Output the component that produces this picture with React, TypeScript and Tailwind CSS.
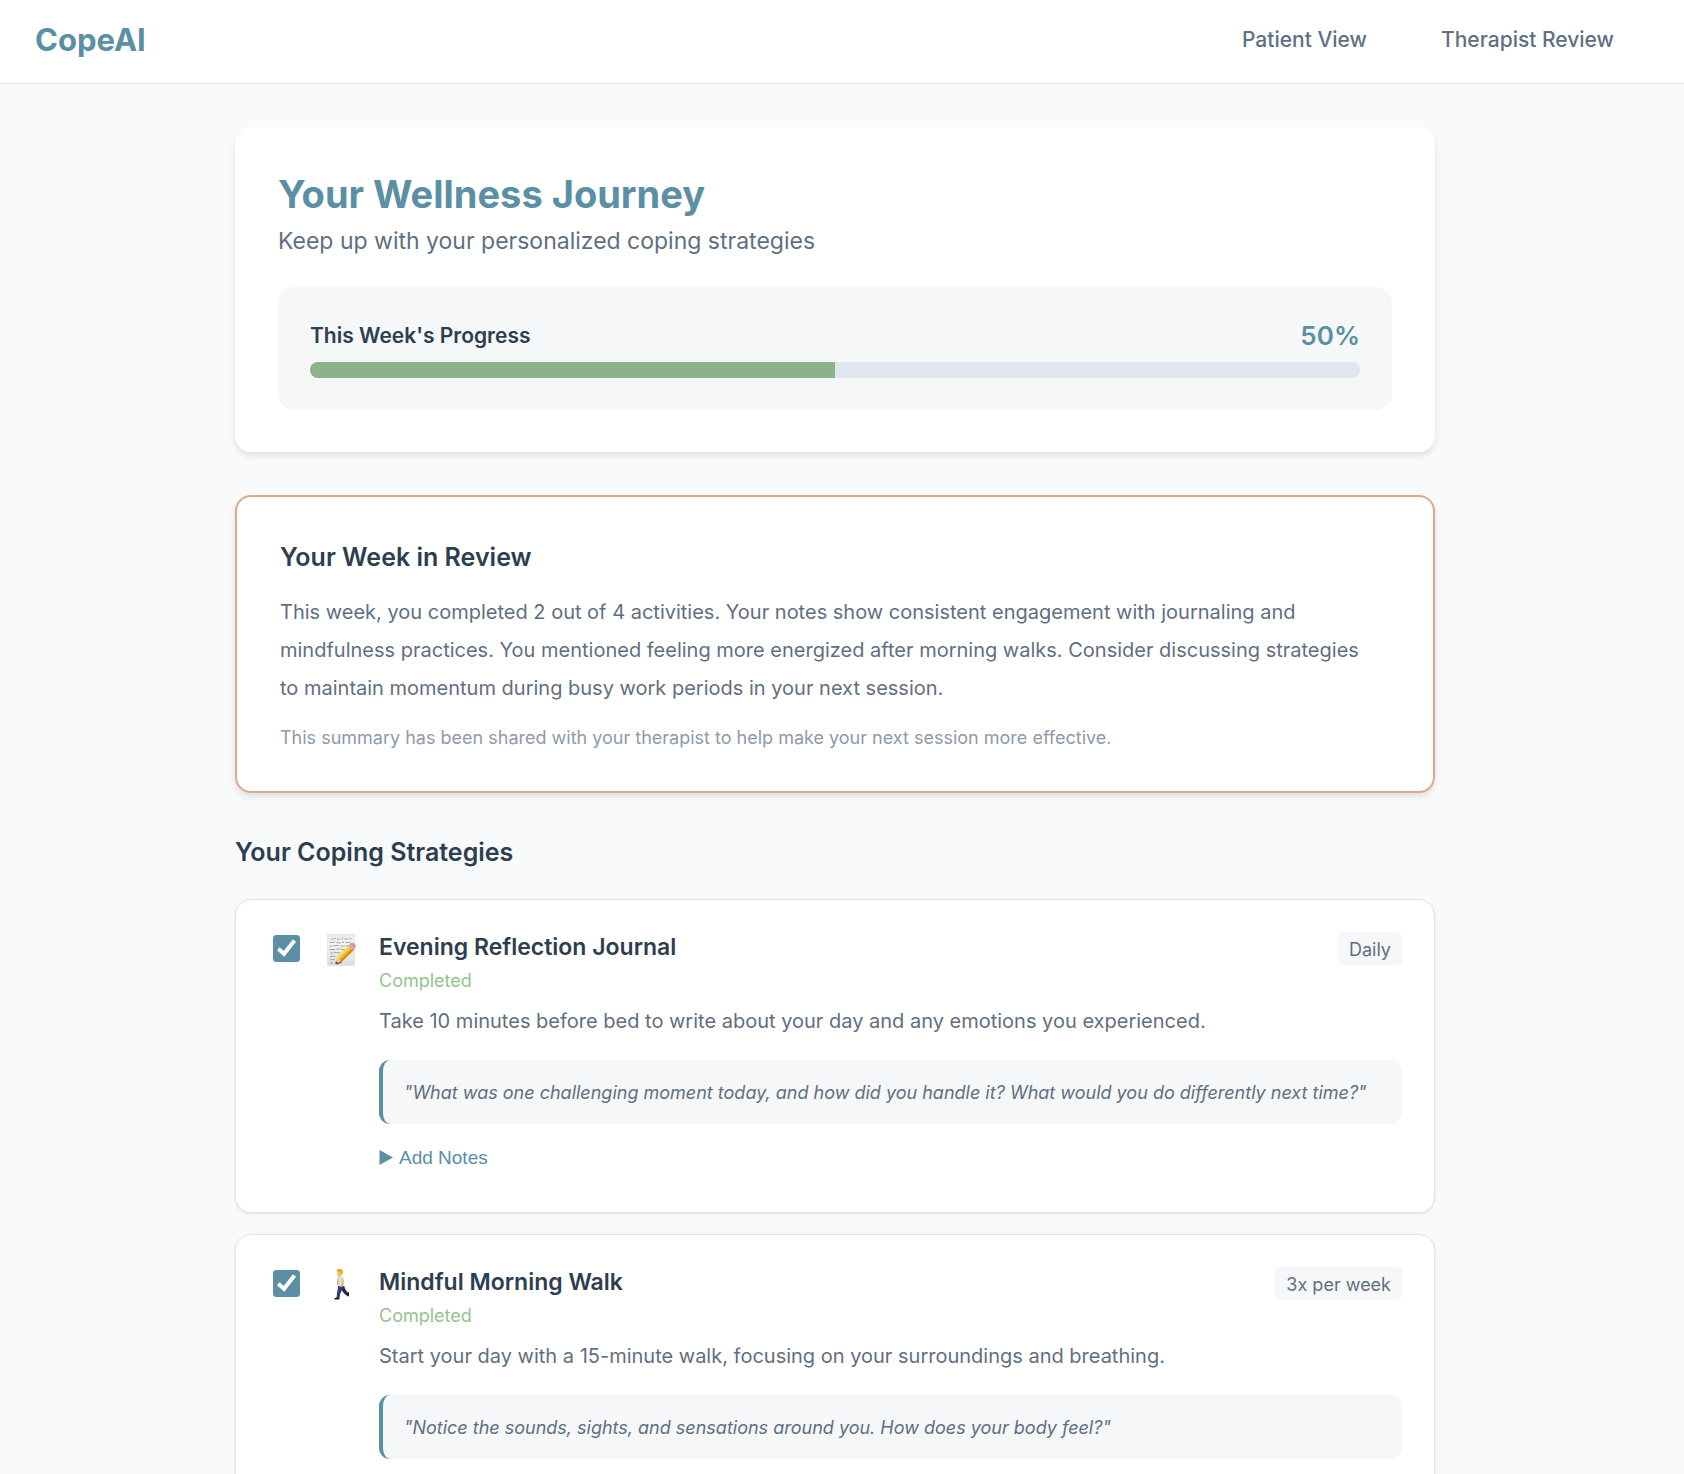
import { useState } from "react";
import type { ReactNode } from "react";

function MemoIcon() {
  return (
    <svg viewBox="0 0 32 36" className="h-9 w-8" aria-hidden="true">
      <defs>
        <linearGradient id="memo-paper" x1="0" y1="0" x2="0" y2="1">
          <stop offset="0" stopColor="#e9e9e9" />
          <stop offset="0.3" stopColor="#f4f4f4" />
          <stop offset="1" stopColor="#dedede" />
        </linearGradient>
      </defs>
      <rect x="1.5" y="2.3" width="27" height="31.4" fill="url(#memo-paper)" stroke="#dcdcdc" strokeWidth="0.6" />
      <g stroke="#6d6d6d" strokeWidth="0.9" fill="none" opacity="0.8">
        <path d="M5 7h2.5M8.500 6.600h1.500M11 7.200h3M15.500 6.800h2M18.500 7h4M24 6.800h1.500" strokeDasharray="1.4 0.5" />
        <path d="M3.800 10.400h5M10.500 10.800h4M16 10.200h2.200M19.500 10.600h5" strokeDasharray="1.8 0.5" />
        <path d="M4 14.200h2.500M7.500 13.600h5.500M14.500 14h4.500M20 13.800h3" strokeDasharray="1.5 0.4" />
        <path d="M3.800 17.600h5.500M10.500 17h3.500M15 17.600h4" strokeDasharray="2 0.4" />
        <path d="M4.400 21h3M8.500 20.600h5.500" strokeDasharray="1.6 0.4" />
        <path d="M4 24.400h5.500M4.600 27.600h4.500M4 31h3" strokeDasharray="1.8 0.5" />
      </g>
      <path d="M9.500 32l1.200-6.300 4.800 4.400z" fill="#edc795" />
      <path d="M9.300 32.200l.6-3 2 2z" fill="#333" />
      <path d="M10.700 25.700L22.300 13.800l5.200 4.500-12 11.800z" fill="#f3b72b" />
      <path d="M10.700 25.700L22.300 13.800l1.600 1.400-11.700 12z" fill="#ffdb66" />
      <path d="M14 28.800L25.800 16.900l1.700 1.400-12 11.800z" fill="#cf8a17" />
      <path d="M22.300 13.800l1.500-1.600 5.200 4.400-1.500 1.700z" fill="#a8b1b5" />
      <path d="M23.800 12.200l1-.9c1-.8 2.400-.6 3.700.5 1.500 1.300 1.700 2.700.9 3.800l-.6 1z" fill="#ec8f8b" />
      <path d="M15.500 30.100l-4.500 1.900" stroke="#222" strokeWidth="1.200" opacity="0.700" />
    </svg>
  );
}

function WalkIcon() {
  return (
    <svg viewBox="1 0 32 36" className="h-9 w-8" aria-hidden="true">
      <path d="M15.600 18.500l3.800.8c.6 2.900 1.500 4.200 3.800 6.800l-2 2.200c-2.700-2.300-4.300-4.200-5-6.800z" fill="#262b57" />
      <path d="M13 17.500l5 .8c-.4 3.600-1 5.200-2.600 8l-.9 4.800h-2.900l.4-5.700c.9-2.300 1-4.500 1-7.900z" fill="#343b78" />
      <path d="M20.900 28l2-2.200.8-1c.6 1.300.5 3.300 0 4.500l-.8.300c-.4-.8-1-1.200-2-1.600z" fill="#15161f" />
      <path d="M9.400 31.800c.2-.9 1.200-1.100 2.400-1.300h2.600v2h-5z" fill="#15161f" />
      <path d="M13.200 8.800c2.200-.8 4.100 0 4.900 2.100.8 2.500.7 5.300.4 8-1.700.8-3.900.6-5.600-.2-.4-3.300-.9-6.400.3-9.900z" fill="#e2e5f0" />
      <path d="M13.200 8.800c-1 2-1.200 4.300-1.200 6.200l1 3.700c1 .5 2 .5 2 .5-.8-3-.7-7 .2-10.700z" fill="#cfd4e4" />
      <path d="M17.500 10.300c1.300 2.600 1.500 5.500.8 8.200l-1.700 1.400-1-.7 1-2.200.2-4.900z" fill="#f1b92e" />
      <path d="M12.700 11.500l-.8 5.600.9.400.6-4.500z" fill="#e5a726" />
      <path d="M12.200 4.200c.3-1.200 1.600-1.800 3-1.600 1.700.2 2.700 1.600 2.400 3.400-.2 1.500-.9 2.300-1.600 2.900l-2.300.5-.3-1c-.8 0-1.200-.3-1.200-1.200z" fill="#f7c83c" />
      <path d="M11.600 4.100c-.1-1.500 1-2.200 2.200-1.900 2.200-.6 4.100.6 4 2.500-.1 1.500-.7 2.500-1.400 3-.1-1.300-.5-2.200-1-2.700-1.100-.2-2.300-.5-3.800-.9z" fill="#dfa629" />
    </svg>
  );
}

type Strategy = {
  id: string;
  title: string;
  frequency: string;
  description: string;
  prompt: string;
  icon: ReactNode;
};

const strategies: Strategy[] = [
  {
    id: "journal",
    title: "Evening Reflection Journal",
    frequency: "Daily",
    description: "Take 10 minutes before bed to write about your day and any emotions you experienced.",
    prompt: "\"What was one challenging moment today, and how did you handle it? What would you do differently next time?\"",
    icon: <MemoIcon />,
  },
  {
    id: "walk",
    title: "Mindful Morning Walk",
    frequency: "3x per week",
    description: "Start your day with a 15-minute walk, focusing on your surroundings and breathing.",
    prompt: "\"Notice the sounds, sights, and sensations around you. How does your body feel?\"",
    icon: <WalkIcon />,
  },
];

function StrategyCard({ strategy }: { strategy: Strategy }) {
  const [done, setDone] = useState(true);
  return (
    <li className="flex rounded-2xl border border-[#e1e6eb] bg-white px-8 pt-8 pb-10 shadow-[0_1px_3px_rgba(0,0,0,0.1)]">
      <span className="ml-[5px] mt-[3px] grid size-[27px] shrink-0">
        <input
          id={strategy.id}
          type="checkbox"
          checked={done}
          onChange={(e) => setDone(e.target.checked)}
          className="peer col-start-1 row-start-1 size-[27px] appearance-none rounded-[3px] border border-[#5b8fa3] bg-white checked:bg-[#5b8fa3]"
        />
        <svg viewBox="0 0 27 27" className="pointer-events-none col-start-1 row-start-1 hidden size-[27px] peer-checked:block" aria-hidden="true">
          <path d="M5.300 13.800L11 18.800L21.500 5.500" fill="none" stroke="#fff" strokeWidth="4" />
        </svg>
      </span>
      <span className="ml-[26px] w-[53px] shrink-0">{strategy.icon}</span>
      <div className="min-w-0 flex-1">
        <div className="flex items-start justify-between">
          <div>
            <h3 className="text-[23px] leading-[30px] font-semibold text-[#2d3e50]">
              <label htmlFor={strategy.id}>{strategy.title}</label>
            </h3>
            <p className="mt-[5px] text-[18px] leading-7 text-[#93c48f]">Completed</p>
          </div>
          <span className="rounded-[5px] bg-[#f5f7f9] px-[11px] pt-[3px] pb-px text-[18px] leading-[29px] text-[#5f6f82]">
            {strategy.frequency}
          </span>
        </div>
        <p className="mt-[10px] text-[20px] leading-8 text-[#5f6f82]">{strategy.description}</p>
        <blockquote className="mt-[23px] rounded-[11px] border-l-4 border-[#5b8fa3] bg-[#f5f7f9] px-[21px] pt-[19px] pb-[17px] text-[18px] leading-7 text-[#5f6f82] italic">
          {strategy.prompt}
        </blockquote>
        <button
          type="button"
          className="mt-5 flex items-center gap-[6px] font-['Liberation_Sans',sans-serif] text-[19px] leading-7 text-[#5b8fa3]"
        >
          <svg viewBox="0 0 14 16" className="h-4 w-[14px]" aria-hidden="true">
            <path d="M0.500 0L14 7.500L0.500 15z" fill="currentColor" />
          </svg>
          Add Notes
        </button>
      </div>
    </li>
  );
}

export default function App() {
  const progress = 50;
  return (
    <div className="min-h-screen bg-[#f9fafc] font-[Inter,sans-serif]">
      <header className="flex items-center justify-between border-b border-[#e1e6eb] bg-white pt-5 pr-11 pb-6 pl-[35px]">
        <a href="#home" className="text-[31px] leading-[39px] font-bold text-[#5b8fa3]">
          CopeAI
        </a>
        <nav className="flex gap-[22px] text-[21px] leading-[39px] font-medium text-[#5f6f82]">
          <a href="#patient" className="px-[26px]">Patient View</a>
          <a href="#therapist" className="px-[26px]">Therapist Review</a>
        </nav>
      </header>

      <main className="pt-[43px] pr-[14px] pb-10">
        <div className="mx-auto max-w-[1200px]">
          <section className="rounded-2xl bg-white px-[43px] pt-[43px] pb-[42px] shadow-[0_4px_6px_rgba(0,0,0,0.1)]">
            <h1 className="text-[38px] leading-[48px] font-bold text-[#5b8fa3]">Your Wellness Journey</h1>
            <p className="mt-[7px] text-[23px] leading-8 text-[#5f6f82]">Keep up with your personalized coping strategies</p>
            <div className="mt-[30px] rounded-2xl bg-[#f5f7f9] p-8">
              <div className="flex items-center justify-between leading-[34px]">
                <span id="progress-label" className="text-[21px] font-semibold text-[#2d3e50]">This Week's Progress</span>
                <span className="text-[26px] font-semibold text-[#5b8fa3]">{progress}%</span>
              </div>
              <div
                role="progressbar"
                aria-labelledby="progress-label"
                aria-valuenow={progress}
                className="mt-[9px] h-4 overflow-hidden rounded-full bg-[#e0e6ed]"
              >
                <div className="h-full bg-[#8bb388]" style={{ width: `${progress}%` }} />
              </div>
            </div>
          </section>

          <section className="mt-[43px] rounded-2xl border-2 border-[#e0a882] bg-white px-[43px] pt-[43px] pb-[39px] shadow-[0_4px_6px_rgba(0,0,0,0.1)]">
            <h2 className="text-[25px] leading-[34px] font-semibold text-[#2d3e50]">Your Week in Review</h2>
            <p className="mt-[19px] max-w-[1090px] text-[20px] leading-[38px] text-[#5f6f82]">
              This week, you completed 2 out of 4 activities. Your notes show consistent engagement with journaling and
              mindfulness practices. You mentioned feeling more energized after morning walks. Consider discussing
              strategies to maintain momentum during busy work periods in your next session.
            </p>
            <p className="mt-[17px] text-[18px] leading-7 text-[#8d9aab]">
              This summary has been shared with your therapist to help make your next session more effective.
            </p>
          </section>

          <h2 className="mt-[42px] text-[25px] leading-[34px] font-semibold text-[#2d3e50]">Your Coping Strategies</h2>
          <ul className="mt-[30px] flex flex-col gap-[21px]">
            {strategies.map((s) => (
              <StrategyCard key={s.id} strategy={s} />
            ))}
          </ul>
        </div>
      </main>
    </div>
  );
}
